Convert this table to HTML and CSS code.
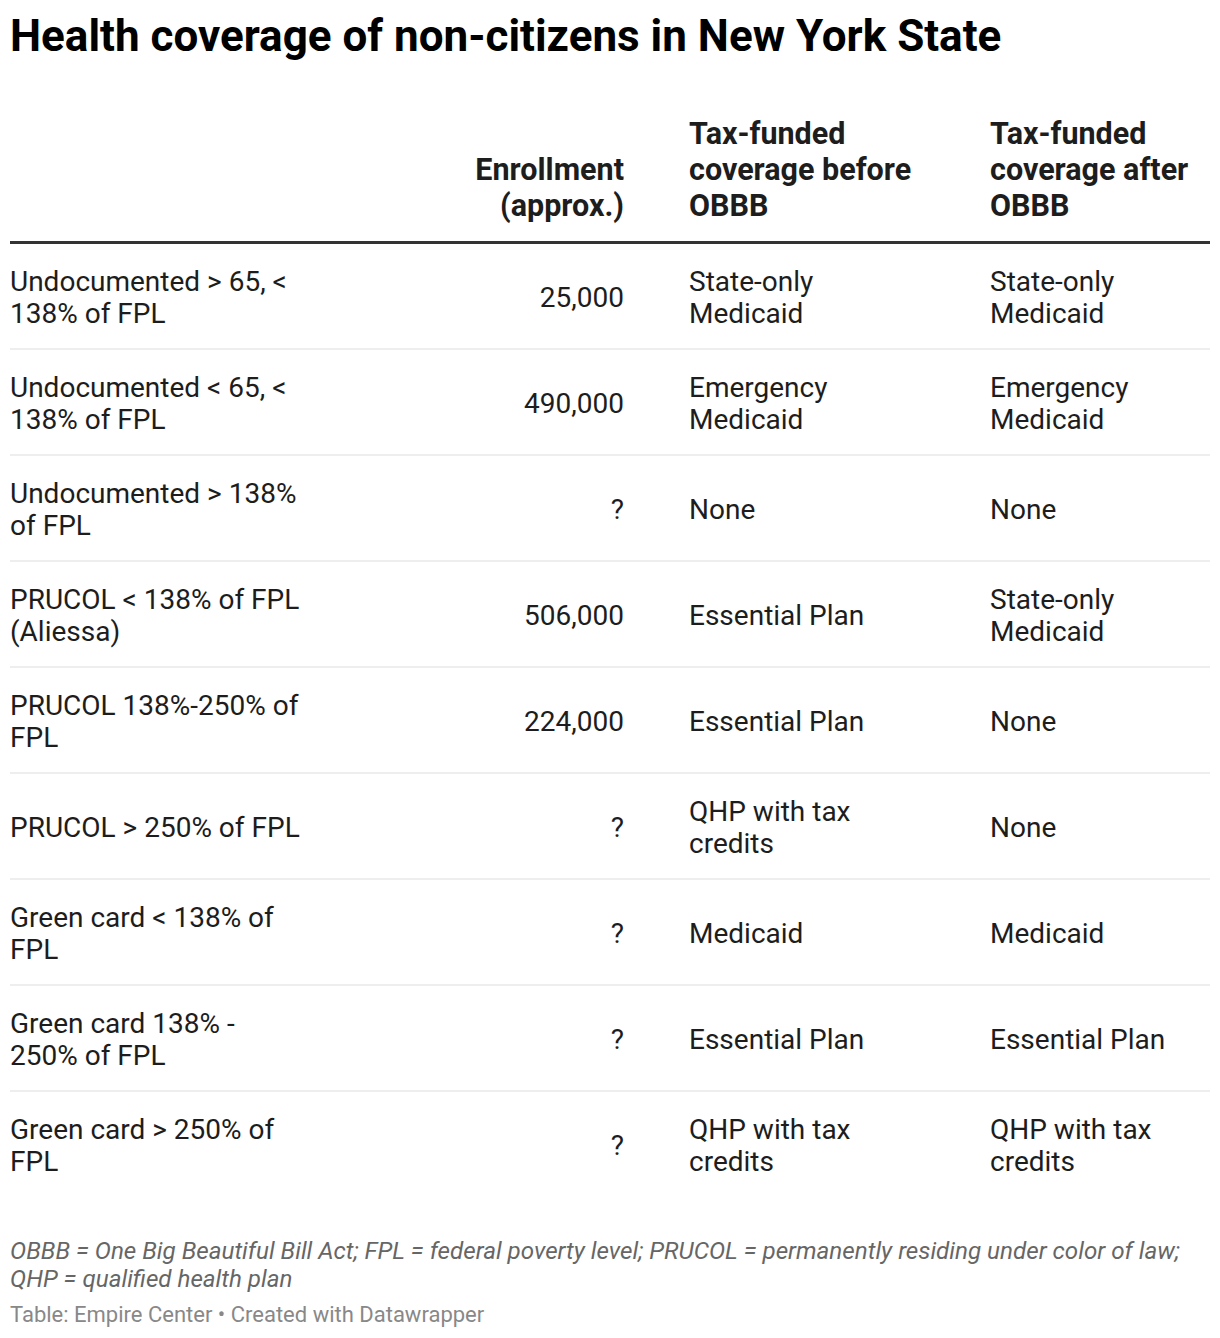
FILE: index.html
```html
<!DOCTYPE html>
<html lang="en">
<head>
<meta charset="utf-8">
<title>Health coverage of non-citizens in New York State</title>
<link rel="stylesheet" href="styles.css">
</head>
<body>
<div class="chart">
  <h1 class="title">Health coverage of non-citizens in New York State</h1>
  <table class="tbl">
    <colgroup>
      <col class="c1"><col class="c2"><col class="c3"><col class="c4">
    </colgroup>
    <thead>
      <tr>
        <th class="label"></th>
        <th class="num">Enrollment (approx.)</th>
        <th class="txt first">Tax-funded coverage before OBBB</th>
        <th class="txt second">Tax-funded coverage after OBBB</th>
      </tr>
    </thead>
    <tbody>
      <tr><td class="label">Undocumented &gt; 65, &lt; 138% of FPL</td><td class="num">25,000</td><td class="txt first">State-only Medicaid</td><td class="txt second">State-only Medicaid</td></tr>
      <tr><td class="label">Undocumented &lt; 65, &lt; 138% of FPL</td><td class="num">490,000</td><td class="txt first">Emergency Medicaid</td><td class="txt second">Emergency Medicaid</td></tr>
      <tr><td class="label">Undocumented &gt; 138% of FPL</td><td class="num">?</td><td class="txt first">None</td><td class="txt second">None</td></tr>
      <tr><td class="label">PRUCOL &lt; 138% of FPL (Aliessa)</td><td class="num">506,000</td><td class="txt first">Essential Plan</td><td class="txt second">State-only Medicaid</td></tr>
      <tr><td class="label">PRUCOL 138%-250% of FPL</td><td class="num">224,000</td><td class="txt first">Essential Plan</td><td class="txt second">None</td></tr>
      <tr><td class="label">PRUCOL &gt; 250% of FPL</td><td class="num">?</td><td class="txt first">QHP with tax credits</td><td class="txt second">None</td></tr>
      <tr><td class="label">Green card &lt; 138% of FPL</td><td class="num">?</td><td class="txt first">Medicaid</td><td class="txt second">Medicaid</td></tr>
      <tr><td class="label">Green card 138% - 250% of FPL</td><td class="num">?</td><td class="txt first">Essential Plan</td><td class="txt second">Essential Plan</td></tr>
      <tr class="last"><td class="label">Green card &gt; 250% of FPL</td><td class="num">?</td><td class="txt first">QHP with tax credits</td><td class="txt second">QHP with tax credits</td></tr>
    </tbody>
  </table>
  <p class="notes">OBBB = One Big Beautiful Bill Act; FPL = federal poverty level; PRUCOL = permanently residing under color of law; QHP = qualified health plan</p>
  <p class="source">Table: Empire Center • Created with Datawrapper</p>
</div>
</body>
</html>
```
FILE: styles.css
```css
html, body {
  margin: 0;
  padding: 0;
  background: #ffffff;
}

.chart {
  padding: 10px 10px 0 10px;
  font-family: Roboto, "Liberation Sans", Arial, sans-serif;
  color: #1d1d1d;
}

.title {
  margin: 0;
  font-size: 44px;
  line-height: 53px;
  font-weight: 700;
  color: #000000;
}

.tbl {
  width: 1200px;
  margin-top: 53px;
  border-collapse: collapse;
  table-layout: fixed;
  font-size: 28px;
}

.c1 { width: 305px; }
.c2 { width: 309px; }
.c3 { width: 297px; }
.c4 { width: 289px; }

.tbl th {
  font-size: 30.5px;
  font-weight: 700;
  line-height: 36px;
  vertical-align: bottom;
  padding: 0 0 17px 0;
  border-bottom: 3px solid #333333;
  text-align: left;
}

.tbl td {
  line-height: 32px;
  vertical-align: middle;
  padding: 22px 0 18px 0;
  border-bottom: 2px solid #eeeeee;
}

.tbl tr.last td {
  border-bottom: none;
}

.tbl .label {
  padding-right: 11px;
}

.tbl .num {
  text-align: right;
  padding-left: 40px;
}

.tbl .first {
  padding-left: 65px;
}

.tbl .second {
  padding-left: 69px;
}

.notes {
  margin: 41px 0 0 0;
  font-size: 24.2px;
  line-height: 28px;
  font-style: italic;
  color: #666666;
}

.source {
  margin: 8px 0 0 0;
  font-size: 22px;
  line-height: 28px;
  color: #888888;
}
```
